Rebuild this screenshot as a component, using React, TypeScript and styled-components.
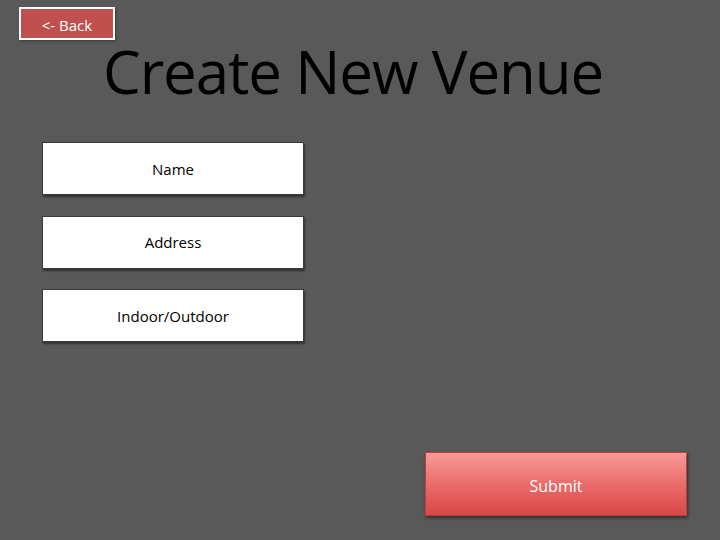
import React from "react";
import styled, { createGlobalStyle } from "styled-components";

const Global = createGlobalStyle`
  html, body { margin: 0; padding: 0; background: #595959; }
  body { font-family: "Open Sans", "Noto Sans", sans-serif; }
`;

const Page = styled.div`
  width: 720px;
  height: 540px;
  background: #595959;
  box-sizing: border-box;
  display: flex;
  flex-direction: column;
  position: relative;
  overflow: hidden;
`;

const BackButton = styled.button`
  position: absolute;
  left: 19px;
  top: 7px;
  width: 96px;
  height: 33px;
  box-sizing: border-box;
  background: #c0504d;
  border: 2px solid #ffffff;
  color: #ffffff;
  font-family: "Open Sans", sans-serif;
  font-size: 15px;
  padding: 3px 0 0;
  box-shadow: 1px 1px 2px rgba(0, 0, 0, 0.35);
  cursor: pointer;
`;

const Title = styled.h1`
  margin: 31px 0 0 0;
  padding-right: 14px;
  text-align: center;
  font-family: "Open Sans", sans-serif;
  font-weight: 400;
  font-size: 60px;
  line-height: 80px;
  letter-spacing: -1.1px;
  color: #000000;
`;

const Fields = styled.div`
  display: flex;
  flex-direction: column;
  gap: 20.5px;
  margin: 31px 0 0 42px;
`;

const Field = styled.div`
  width: 262px;
  height: 53px;
  box-sizing: border-box;
  background: #ffffff;
  border: 1px solid #3a3a3a;
  box-shadow: 1px 2px 2px rgba(0, 0, 0, 0.45);
  display: flex;
  align-items: center;
  justify-content: center;
  font-size: 15px;
  color: #000000;
`;

const SubmitRow = styled.div`
  margin-top: auto;
  margin-bottom: 24px;
  display: flex;
  justify-content: flex-end;
  padding-right: 33px;
`;

const SubmitButton = styled.button`
  width: 262px;
  height: 64px;
  box-sizing: border-box;
  border: 1px solid #b8403e;
  background: linear-gradient(to bottom, #f99a98 0%, #ea6d6b 50%, #d84746 100%);
  color: #ffffff;
  font-family: "Open Sans", sans-serif;
  font-size: 16px;
  padding: 4px 0 0;
  box-shadow: 1px 2px 3px rgba(0, 0, 0, 0.45);
  cursor: pointer;
`;

export default function App() {
  const fields = ["Name", "Address", "Indoor/Outdoor"];
  return (
    <Page>
      <Global />
      <BackButton>&lt;- Back</BackButton>
      <Title>Create New Venue</Title>
      <Fields>
        {fields.map((f) => (
          <Field key={f}>{f}</Field>
        ))}
      </Fields>
      <SubmitRow>
        <SubmitButton>Submit</SubmitButton>
      </SubmitRow>
    </Page>
  );
}
